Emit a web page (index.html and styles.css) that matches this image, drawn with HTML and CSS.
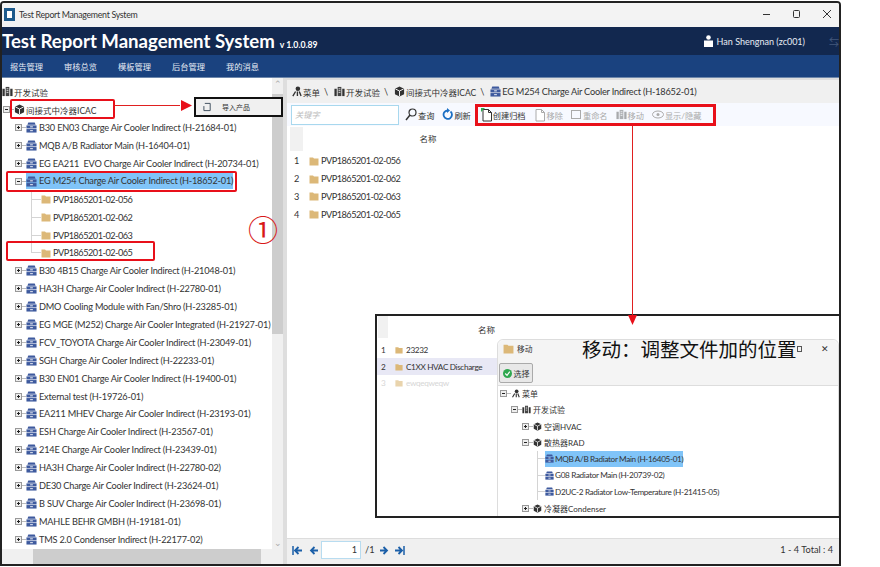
FILE: index.html
```html
<!DOCTYPE html>
<html lang="zh-CN">
<head>
  <meta charset="UTF-8">
  <title>Test Report Management System</title>
  <link rel="stylesheet" href="styles.css">
</head>
<body>

  <svg class="sprites" width="0" height="0">
    <symbol id="i-box" viewBox="0 0 12 12">
      <path d="M6 .5 11 3v6l-5 2.500L1 9V3z" fill="#333"/>
      <path d="M1.500 3.200 6 5.500l4.500-2.300M6 5.500V11" stroke="#fff" fill="none"/>
    </symbol>
    <symbol id="i-server" viewBox="0 0 12 12">
      <path d="M2.500 .5h7l1 2.500h-9z" fill="#3e5a9e"/>
      <rect x=".5" y="3.700" width="11" height="3.300" fill="#3e5a9e"/>
      <rect x=".5" y="7.700" width="11" height="3.800" fill="#3e5a9e"/>
      <rect x="4.500" y="4.800" width="3" height="1" fill="#fff"/>
      <rect x="4.500" y="9" width="3" height="1" fill="#fff"/>
    </symbol>
    <symbol id="i-folder" viewBox="0 0 10 10">
      <path d="M.5 1.500H4l1 1h4.500v7h-9z" fill="#dcb878"/>
    </symbol>
    <symbol id="i-lab" viewBox="0 0 12 12">
      <rect x=".5" y="3" width="2.500" height="8" fill="#333"/>
      <rect x="4" y="1" width="4" height="10" fill="#444"/>
      <rect x="9" y="3" width="2.500" height="8" fill="#333"/>
      <path d="M5 3h2M5 5h2M5 7h2" stroke="#fff" stroke-width=".8"/>
    </symbol>
    <symbol id="i-menu" viewBox="0 0 12 12">
      <circle cx="7.500" cy="3" r="2.500" fill="#333"/>
      <path d="M5 6 2 11M7 6v5M9 6l2 5" stroke="#333" stroke-width="1.500" fill="none"/>
    </symbol>
    <symbol id="i-plus" viewBox="0 0 11 7">
      <rect x=".5" y=".5" width="6" height="6" fill="#eee" stroke="#999"/>
      <path d="M2 3.500h3M3.500 2v3" stroke="#222"/>
      <path d="M7 3.500h4" stroke="#bbb"/>
    </symbol>
    <symbol id="i-minus" viewBox="0 0 11 7">
      <rect x=".5" y=".5" width="6" height="6" fill="#eee" stroke="#999"/>
      <path d="M2 3.500h3" stroke="#222"/>
      <path d="M7 3.500h4" stroke="#bbb"/>
    </symbol>
    <symbol id="i-page" viewBox="0 0 12 14">
      <path d="M2 1.500h5.500l3 3V13H2z" fill="#fff" stroke="currentColor"/>
      <path d="M7.500 1.500v3h3" fill="none" stroke="currentColor"/>
    </symbol>
    <symbol id="i-first" viewBox="0 0 10 9">
      <path d="M1 0v9" stroke="#1b5fa8" stroke-width="1.500"/>
      <path d="M10 4.500H4M6.500 1 3 4.500 6.500 8" stroke="#1b5fa8" stroke-width="1.800" fill="none"/>
    </symbol>
    <symbol id="i-prev" viewBox="0 0 10 9">
      <path d="M9 4.500H2M5.500 1 2 4.500 5.500 8" stroke="#1b5fa8" stroke-width="1.800" fill="none"/>
    </symbol>
    <symbol id="i-next" viewBox="0 0 10 9">
      <path d="M1 4.500h7M4.500 1 8 4.500 4.500 8" stroke="#1b5fa8" stroke-width="1.800" fill="none"/>
    </symbol>
    <symbol id="i-last" viewBox="0 0 10 9">
      <path d="M9 0v9" stroke="#1b5fa8" stroke-width="1.500"/>
      <path d="M0 4.500h6M3.500 1 7 4.500 3.500 8" stroke="#1b5fa8" stroke-width="1.800" fill="none"/>
    </symbol>
  </svg>

  <div class="window">
    <div class="titlebar">
      <svg class="app-icon" width="11" height="13" viewBox="0 0 11 13"><rect width="11" height="13" fill="#1d5a8c"/><rect x="3" y="3" width="5" height="7" fill="#fff"/></svg>
      <span class="title-text">Test Report Management System</span>
      <div class="win-btns">
        <svg width="10" height="10" viewBox="0 0 10 10"><path d="M1 5.500h7" stroke="#333"/></svg>
        <svg width="10" height="10" viewBox="0 0 10 10"><rect x="1.500" y="1.500" width="6" height="7" rx="1" fill="none" stroke="#333"/></svg>
        <svg width="10" height="10" viewBox="0 0 10 10"><path d="M1 1l8 8M9 1l-8 8" stroke="#333"/></svg>
      </div>
    </div>

    <header class="brand">
      <span class="brand-name">Test Report Management System</span>
      <span class="brand-ver">v 1.0.0.89</span>
      <div class="user">
        <svg width="9" height="12" viewBox="0 0 9 12"><circle cx="4.500" cy="2.500" r="2.300" fill="#fff"/><path d="M0 5.500h9V12H0z" fill="#fff"/></svg>
        <span>Han Shengnan (zc001)</span>
        <span class="swap">⇆</span>
      </div>
    </header>

    <nav class="nav">
      <a>报告管理</a><a>审核总览</a><a>模板管理</a><a>后台管理</a><a>我的消息</a>
    </nav>

    <main class="content">
      <aside class="side">
        <div class="tree">
          <div class="row lv0 cn"><svg class="ico"><use href="#i-lab"/></svg>开发试验</div>
          <div class="row lv1 cn"><svg class="exp"><use href="#i-minus"/></svg><svg class="ico"><use href="#i-box"/></svg>间接式中冷器ICAC</div>
          <div class="row lv2"><svg class="exp"><use href="#i-plus"/></svg><svg class="ico"><use href="#i-server"/></svg>B30 EN03 Charge Air Cooler Indirect (H-21684-01)</div>
          <div class="row lv2"><svg class="exp"><use href="#i-plus"/></svg><svg class="ico"><use href="#i-server"/></svg>MQB A/B Radiator Main (H-16404-01)</div>
          <div class="row lv2"><svg class="exp"><use href="#i-plus"/></svg><svg class="ico"><use href="#i-server"/></svg>EG EA211&nbsp; EVO Charge Air Cooler Indirect (H-20734-01)</div>
          <div class="row lv2"><svg class="exp"><use href="#i-minus"/></svg><span class="sel"><svg class="ico"><use href="#i-server"/></svg>EG M254 Charge Air Cooler Indirect (H-18652-01)</span></div>
          <div class="row lv3"><svg class="ico-f"><use href="#i-folder"/></svg>PVP1865201-02-056</div>
          <div class="row lv3"><svg class="ico-f"><use href="#i-folder"/></svg>PVP1865201-02-062</div>
          <div class="row lv3"><svg class="ico-f"><use href="#i-folder"/></svg>PVP1865201-02-063</div>
          <div class="row lv3 end"><svg class="ico-f"><use href="#i-folder"/></svg>PVP1865201-02-065</div>
          <div class="row lv2"><svg class="exp"><use href="#i-plus"/></svg><svg class="ico"><use href="#i-server"/></svg>B30 4B15 Charge Air Cooler Indirect (H-21048-01)</div>
          <div class="row lv2"><svg class="exp"><use href="#i-plus"/></svg><svg class="ico"><use href="#i-server"/></svg>HA3H Charge Air Cooler Indirect (H-22780-01)</div>
          <div class="row lv2"><svg class="exp"><use href="#i-plus"/></svg><svg class="ico"><use href="#i-server"/></svg>DMO Cooling Module with Fan/Shro (H-23285-01)</div>
          <div class="row lv2"><svg class="exp"><use href="#i-plus"/></svg><svg class="ico"><use href="#i-server"/></svg>EG MGE (M252) Charge Air Cooler Integrated (H-21927-01)</div>
          <div class="row lv2"><svg class="exp"><use href="#i-plus"/></svg><svg class="ico"><use href="#i-server"/></svg>FCV_TOYOTA Charge Air Cooler Indirect (H-23049-01)</div>
          <div class="row lv2"><svg class="exp"><use href="#i-plus"/></svg><svg class="ico"><use href="#i-server"/></svg>SGH Charge Air Cooler Indirect (H-22233-01)</div>
          <div class="row lv2"><svg class="exp"><use href="#i-plus"/></svg><svg class="ico"><use href="#i-server"/></svg>B30 EN01 Charge Air Cooler Indirect (H-19400-01)</div>
          <div class="row lv2"><svg class="exp"><use href="#i-plus"/></svg><svg class="ico"><use href="#i-server"/></svg>External test (H-19726-01)</div>
          <div class="row lv2"><svg class="exp"><use href="#i-plus"/></svg><svg class="ico"><use href="#i-server"/></svg>EA211 MHEV Charge Air Cooler Indirect (H-23193-01)</div>
          <div class="row lv2"><svg class="exp"><use href="#i-plus"/></svg><svg class="ico"><use href="#i-server"/></svg>ESH Charge Air Cooler Indirect (H-23567-01)</div>
          <div class="row lv2"><svg class="exp"><use href="#i-plus"/></svg><svg class="ico"><use href="#i-server"/></svg>214E Charge Air Cooler Indirect (H-23439-01)</div>
          <div class="row lv2"><svg class="exp"><use href="#i-plus"/></svg><svg class="ico"><use href="#i-server"/></svg>HA3H Charge Air Cooler Indirect (H-22780-02)</div>
          <div class="row lv2"><svg class="exp"><use href="#i-plus"/></svg><svg class="ico"><use href="#i-server"/></svg>DE30 Charge Air Cooler Indirect (H-23624-01)</div>
          <div class="row lv2"><svg class="exp"><use href="#i-plus"/></svg><svg class="ico"><use href="#i-server"/></svg>B SUV Charge Air Cooler Indirect (H-23698-01)</div>
          <div class="row lv2"><svg class="exp"><use href="#i-plus"/></svg><svg class="ico"><use href="#i-server"/></svg>MAHLE BEHR GMBH (H-19181-01)</div>
          <div class="row lv2"><svg class="exp"><use href="#i-plus"/></svg><svg class="ico"><use href="#i-server"/></svg>TMS 2.0 Condenser Indirect (H-22177-02)</div>
        </div>
        <div class="vbar"><span class="up">⌃</span><div class="vthumb"></div><span class="down">⌄</span></div>
        <div class="hbar"><div class="hthumb"></div></div>
      </aside>

      <section class="panel">
        <div class="crumbs">
          <svg class="ico"><use href="#i-menu"/></svg><span class="cn">菜单</span><i>\</i>
          <svg class="ico"><use href="#i-lab"/></svg><span class="cn">开发试验</span><i>\</i>
          <svg class="ico"><use href="#i-box"/></svg><span class="cn">间接式中冷器ICAC</span><i>\</i>
          <svg class="ico"><use href="#i-server"/></svg>EG M254 Charge Air Cooler Indirect (H-18652-01)
        </div>
        <div class="toolbar">
          <div class="search">关键字</div>
          <span class="tool"><svg width="12" height="13" viewBox="0 0 12 13"><circle cx="7.500" cy="4.500" r="3.500" fill="none" stroke="#333" stroke-width="1.200"/><path d="M5 7l-4 5" stroke="#333" stroke-width="1.500"/></svg>查询</span>
          <span class="tool"><svg width="11" height="13" viewBox="0 0 11 13"><path d="M8.500 3.500a4.200 4.200 0 1 1-3-1" fill="none" stroke="#1b6fc4" stroke-width="1.800"/><path d="M5 0l3 2.500L5 5z" fill="#1b6fc4"/></svg>刷新</span>
          <span class="tool tool-new"><svg width="12" height="14" viewBox="0 0 12 14" class="pg"><use href="#i-page" width="12" height="14"/><path d="M0 0h4L0 4z" fill="#2fa84f"/></svg>创建归档</span>
          <span class="tool off"><svg width="12" height="14" class="pg"><use href="#i-page"/></svg>移除</span>
          <span class="tool off"><svg width="11" height="11" viewBox="0 0 11 11"><rect x=".5" y="1.500" width="9" height="8" fill="none" stroke="#aaa"/></svg>重命名</span>
          <span class="tool off"><svg class="dim" width="11" height="11"><use href="#i-lab"/></svg>移动</span>
          <span class="tool off"><svg width="12" height="9" viewBox="0 0 12 9"><ellipse cx="6" cy="4.500" rx="5.500" ry="3.500" fill="none" stroke="#aaa"/><circle cx="6" cy="4.500" r="1.500" fill="#aaa"/></svg>显示/隐藏</span>
        </div>
        <div class="thead"><div class="corner"></div><div class="th-name">名称</div></div>
        <div class="tbody">
          <div class="trow"><span class="num">1</span><svg class="ico-f"><use href="#i-folder"/></svg>PVP1865201-02-056</div>
          <div class="trow"><span class="num">2</span><svg class="ico-f"><use href="#i-folder"/></svg>PVP1865201-02-062</div>
          <div class="trow"><span class="num">3</span><svg class="ico-f"><use href="#i-folder"/></svg>PVP1865201-02-063</div>
          <div class="trow"><span class="num">4</span><svg class="ico-f"><use href="#i-folder"/></svg>PVP1865201-02-065</div>
        </div>
        <div class="pager">
          <svg class="pg-btn"><use href="#i-first"/></svg>
          <svg class="pg-btn"><use href="#i-prev"/></svg>
          <div class="pg-input">1</div><span class="pg-total">/1</span>
          <svg class="pg-btn"><use href="#i-next"/></svg>
          <svg class="pg-btn"><use href="#i-last"/></svg>
          <span class="pg-info">1 - 4 Total : 4</span>
        </div>
      </section>
    </main>
  </div>

  <!-- annotations over the screenshot -->
  <div class="mark m-icac"></div>
  <div class="mark m-m254"></div>
  <div class="mark m-065"></div>
  <div class="mark m-tools"></div>
  <div class="circled">①</div>
  <div class="ctx">
    <svg width="9" height="10" viewBox="0 0 10 10"><path d="M2 1h6v8H1V4" fill="none" stroke="#345"/></svg>
    <span>导入产品</span>
  </div>

  <div class="inset">
    <div class="ins-list">
      <div class="ins-head"><div class="corner"></div><div class="ins-name">名称</div></div>
      <div class="ins-row"><span class="num">1</span><svg class="ico-f"><use href="#i-folder"/></svg>23232</div>
      <div class="ins-row hl"><span class="num">2</span><svg class="ico-f"><use href="#i-folder"/></svg>C1XX HVAC Discharge</div>
      <div class="ins-row faint"><span class="num">3</span><svg class="ico-f"><use href="#i-folder"/></svg>ewqeqweqw</div>
    </div>
    <div class="dlg">
      <div class="dlg-title">
        <svg class="ico"><use href="#i-folder"/></svg><span class="dlg-small">移动</span>
        <span class="dlg-big">移动：调整文件加的位置</span><span class="dlg-box"></span>
        <span class="dlg-x">✕</span>
      </div>
      <div class="dlg-tools">
        <span class="dlg-btn"><svg width="9" height="9" viewBox="0 0 10 10"><circle cx="5" cy="5" r="5" fill="#2fa84f"/><path d="M2.500 5l2 2 3-4" stroke="#fff" fill="none" stroke-width="1.300"/></svg>选择</span>
      </div>
      <div class="dlg-tree">
        <div class="drow d0 dcn"><svg class="exp"><use href="#i-minus"/></svg><svg class="ico"><use href="#i-menu"/></svg>菜单</div>
        <div class="drow d1 dcn"><svg class="exp"><use href="#i-minus"/></svg><svg class="ico"><use href="#i-lab"/></svg>开发试验</div>
        <div class="drow d2 dcn"><svg class="exp"><use href="#i-plus"/></svg><svg class="ico"><use href="#i-box"/></svg>空调HVAC</div>
        <div class="drow d2 dcn"><svg class="exp"><use href="#i-minus"/></svg><svg class="ico"><use href="#i-box"/></svg>散热器RAD</div>
        <div class="drow d3"><span class="sel"><svg class="ico"><use href="#i-server"/></svg>MQB A/B Radiator Main (H-16405-01)</span></div>
        <div class="drow d3"><svg class="ico"><use href="#i-server"/></svg>G08 Radiator Main (H-20739-02)</div>
        <div class="drow d3"><svg class="ico"><use href="#i-server"/></svg>D2UC-2 Radiator Low-Temperature (H-21415-05)</div>
        <div class="drow d2 dcn"><svg class="exp"><use href="#i-plus"/></svg><svg class="ico"><use href="#i-box"/></svg>冷凝器Condenser</div>
      </div>
    </div>
  </div>

  <svg class="arrows" width="880" height="567" viewBox="0 0 880 567">
    <path d="M114 105.500h66" stroke="#e02020"/>
    <path d="M181 100l11 5.500-11 5.500z" fill="#e8101a"/>
    <path d="M632.500 126v190" stroke="#e02020"/>
    <path d="M628 315h9l-4.500 10z" fill="#e8101a"/>
  </svg>

</body>
</html>
```

FILE: styles.css
```css
* {
  box-sizing: border-box;
}
html, body {
  margin: 0;
  height: 567px;
  overflow: hidden;
  background: #fff;
}
body {
  position: relative;
  font-family: Lato, "Noto Sans CJK SC", sans-serif;
  font-size: 9.2px;
  letter-spacing: -0.2px;
  color: #333;
}
.sprites {
  position: absolute;
}
svg {
  flex: none;
}
.cn {
  font-size: 8.5px;
  letter-spacing: 0;
}

/* window */
.window {
  width: 841px;
  height: 565px;
  margin-top: 1px;
  border: 2px solid #222;
  border-radius: 4px 4px 0 0;
  display: flex;
  flex-direction: column;
  overflow: hidden;
}
.titlebar {
  height: 24px;
  background: #f3f3f3;
  display: flex;
  align-items: center;
  padding: 0 0 2px 2px;
  flex: none;
}
.title-text {
  margin-left: 4px;
  font-size: 8.8px;
  letter-spacing: -0.3px;
}
.win-btns {
  margin-left: auto;
  display: flex;
  gap: 20px;
  padding-right: 7px;
}
.brand {
  height: 28px;
  flex: none;
  background: #12284f;
  color: #fff;
  display: flex;
  align-items: baseline;
}
.brand-name {
  font-size: 18.6px;
  font-weight: 700;
  letter-spacing: 0;
  line-height: 28px;
}
.brand-ver {
  margin-left: 5px;
  font-size: 8.7px;
  font-weight: 700;
  letter-spacing: 0;
}
.user {
  margin-left: auto;
  align-self: center;
  display: flex;
  align-items: center;
  gap: 4px;
  font-size: 9px;
  letter-spacing: 0;
  color: #e8ecf4;
}
.swap {
  margin-left: 20px;
  color: #44587c;
  font-size: 10px;
}
.nav {
  height: 23px;
  flex: none;
  background: #1a427f;
  border-bottom: 1px solid #6d87ab;
  display: flex;
  align-items: center;
  gap: 21px;
  padding-left: 8px;
  color: #e8edf5;
  font-size: 8.25px;
  letter-spacing: 0;
}

/* left tree */
.content {
  flex: 1;
  display: flex;
  gap: 4px;
  background: #dedede;
  min-height: 0;
}
.side {
  width: 281px;
  flex: none;
  background: #fff;
  display: grid;
  grid-template-columns: 1fr 11px;
  grid-template-rows: 1fr 15px;
  min-height: 0;
}
.tree {
  padding-top: 5px;
  overflow: hidden;
}
.row {
  height: 17.9px;
  display: flex;
  align-items: center;
  white-space: nowrap;
}
.ico {
  width: 11px;
  height: 11px;
  margin-right: 2px;
}
.ico-f {
  width: 10px;
  height: 10px;
  margin-right: 2px;
}
.exp {
  width: 11px;
  height: 7px;
}
.lv0 .ico {
  margin-right: 1px;
}
.lv1 {
  padding-left: 1px;
}
.lv1 .ico {
  margin-right: 1px;
}
.lv2 {
  padding-left: 13px;
}
.lv3 {
  padding-left: 29px;
  letter-spacing: -0.5px;
}
.lv3::before {
  content: "";
  width: 9px;
  height: 100%;
  border-left: 1px solid #d4d4d4;
  background: linear-gradient(#d4d4d4, #d4d4d4) center / 100% 1px no-repeat;
}
.lv3.end::before {
  height: 50%;
  align-self: flex-start;
  background: linear-gradient(#d4d4d4, #d4d4d4) bottom / 100% 1px no-repeat;
}
.sel {
  display: flex;
  align-items: center;
  background: #80c4f8;
  line-height: 16px;
}
.vbar {
  background: #f0f0f0;
  display: flex;
  flex-direction: column;
  align-items: center;
  color: #aaa;
  font-size: 9px;
}
.up, .down {
  height: 12px;
  line-height: 12px;
}
.vthumb {
  width: 100%;
  height: 240px;
  margin-top: 4px;
  background: #cdcdcd;
}
.down {
  margin-top: auto;
}
.hbar {
  grid-column: 1 / 3;
  background: #f0f0f0;
  padding-left: 31px;
}
.hthumb {
  width: 228px;
  height: 100%;
  background: #cdcdcd;
}

/* right panel */
.panel {
  flex: 1;
  min-width: 0;
  display: flex;
  flex-direction: column;
  margin-top: 2px;
  background: #fff;
}
.crumbs {
  height: 23px;
  flex: none;
  padding-left: 4px;
  background: #f0f0f0;
  display: flex;
  align-items: center;
  white-space: nowrap;
}
.crumbs .ico {
  margin-right: 1px;
}
.crumbs i {
  font-style: normal;
  margin: 0 6px 0 4px;
}
.toolbar {
  height: 23px;
  flex: none;
  background: #f7f9ff;
  display: flex;
  align-items: center;
  font-size: 8.2px;
  letter-spacing: 0;
}
.search {
  width: 108px;
  height: 20px;
  margin-left: 4px;
  border: 1px solid #a8d8ee;
  background: #fff;
  color: #bbb;
  font-style: italic;
  line-height: 18px;
  padding-left: 3px;
}
.tool {
  display: flex;
  align-items: center;
  gap: 1px;
  margin-left: 8px;
  white-space: nowrap;
}
.tool:nth-child(2) {
  margin-left: 6px;
}
.tool-new {
  margin-left: 10px;
  gap: 0;
}
.pg {
  color: #333;
}
.off {
  color: #aaa;
}
.off .pg {
  color: #aaa;
}
.dim {
  opacity: .4;
}
.thead {
  height: 24px;
  flex: none;
  margin-top: 1px;
  display: flex;
}
.corner {
  width: 13px;
  background: #f1f1f1;
  margin-left: 3px;
}
.th-name {
  width: 250px;
  text-align: center;
  line-height: 24px;
  font-size: 8.5px;
  letter-spacing: 0;
}
.tbody {
  flex: 1;
  padding-top: 1px;
}
.trow {
  height: 17.8px;
  display: flex;
  align-items: center;
  padding-left: 7px;
  letter-spacing: -0.5px;
}
.num {
  width: 15px;
}
.pager {
  height: 26px;
  flex: none;
  background: #f0f0f0;
  border-top: 1px solid #ddd;
  display: flex;
  align-items: flex-start;
  padding: 2px 0 0 5px;
  letter-spacing: 0;
}
.pg-btn {
  width: 10px;
  height: 9px;
  margin: 5px 7px 0 0;
}
.pg-btn:nth-child(2) {
  margin-right: 2px;
}
.pg-btn:nth-child(5) {
  margin-right: 6px;
}
.pg-input {
  width: 40px;
  height: 18px;
  border: 1px solid #b8dcf0;
  background: #fff;
  text-align: right;
  line-height: 16px;
  padding-right: 3px;
}
.pg-total {
  line-height: 18px;
  margin: 0 5px 0 4px;
}
.pg-info {
  margin-left: auto;
  margin-right: 6px;
  line-height: 18px;
}

/* annotations */
.mark {
  position: absolute;
  border: 2px solid #e8101a;
  border-radius: 2px;
}
.m-icac {
  left: 10px;
  top: 99px;
  width: 105px;
  height: 20px;
}
.m-m254 {
  left: 6px;
  top: 171px;
  width: 231px;
  height: 21px;
}
.m-065 {
  left: 6px;
  top: 241px;
  width: 149px;
  height: 20px;
}
.m-tools {
  left: 475px;
  top: 104px;
  width: 241px;
  height: 22px;
  border-width: 3px;
  border-radius: 0;
}
.circled {
  position: absolute;
  left: 248px;
  top: 210px;
  color: #d81818;
  font-family: "Noto Sans CJK SC", serif;
  font-size: 30px;
  letter-spacing: 0;
  line-height: 36px;
}
.arrows {
  position: absolute;
  left: 0;
  top: 0;
  pointer-events: none;
}
.ctx {
  position: absolute;
  left: 194px;
  top: 97px;
  width: 89px;
  height: 20px;
  border: 2px solid #111;
  background: #f0f0f0;
  display: flex;
  align-items: center;
  padding-left: 7px;
  font-size: 7px;
  letter-spacing: 0;
  gap: 10px;
}

/* inset picture of the move dialog */
.inset {
  position: absolute;
  left: 375px;
  top: 314px;
  width: 466px;
  height: 204px;
  border: 2px solid #222;
  background: #fff;
  overflow: hidden;
}
.ins-list {
  position: absolute;
  left: 0;
  top: 0;
  width: 122px;
}
.ins-head {
  height: 22px;
  display: flex;
  width: 300px;
}
.ins-head .corner {
  margin-left: 1px;
  width: 10px;
}
.ins-name {
  margin-left: 90px;
  line-height: 28px;
  font-size: 8.5px;
  letter-spacing: 0;
}
.ins-row {
  height: 16.4px;
  display: flex;
  align-items: center;
  padding-left: 4px;
  font-size: 8.2px;
  letter-spacing: -0.35px;
  white-space: nowrap;
}
.ins-row .num {
  width: 14px;
}
.ins-row .ico-f {
  width: 8px;
  height: 8px;
  margin-right: 3px;
}
.ins-head + .ins-row {
  margin-top: 4px;
}
.hl {
  background: #e8e8f5;
}
.faint {
  color: #bbb;
  opacity: .6;
}
.dlg {
  position: absolute;
  left: 120px;
  top: 23px;
  width: 342px;
  height: 180px;
  background: #fff;
  border: 1px solid #ddd;
  border-radius: 6px 6px 0 0;
}
.dlg-title {
  height: 21px;
  display: flex;
  align-items: center;
  background: #f4f4f4;
  padding: 0 0 4px 5px;
  border-radius: 6px 6px 0 0;
}
.dlg-small {
  font-size: 7.7px;
  letter-spacing: 0;
  width: 65px;
  margin-left: 1px;
}
.dlg-big {
  font-family: "Noto Sans CJK SC", sans-serif;
  font-size: 19.5px;
  letter-spacing: 0;
  color: #111;
  white-space: nowrap;
}
.dlg-box {
  width: 5px;
  height: 6px;
  border: 1px solid #555;
}
.dlg-x {
  margin-left: auto;
  padding-right: 9px;
  font-size: 9px;
}
.dlg-tools {
  height: 25px;
  display: flex;
  align-items: center;
  background: #f4f4f4;
  border-bottom: 1px solid #ddd;
  padding-left: 1px;
}
.dlg-btn {
  display: flex;
  align-items: center;
  gap: 2px;
  width: 34px;
  height: 20px;
  justify-content: center;
  border: 1px solid #aaa;
  border-radius: 2px;
  background: #e8e8e8;
  font-size: 8px;
  letter-spacing: 0;
}
.dlg-tree {
  margin-top: -1px;
}
.drow {
  height: 16.45px;
  display: flex;
  align-items: center;
  font-size: 8.2px;
  letter-spacing: -0.35px;
  white-space: nowrap;
}
.dcn {
  font-size: 8px;
  letter-spacing: 0;
}
.drow .ico {
  width: 9px;
  height: 9px;
}
.d3 .ico {
  margin-right: 1px;
}
.d0 {
  padding-left: 2px;
}
.d1 {
  padding-left: 13px;
}
.d2 {
  padding-left: 24px;
}
.d3 {
  padding-left: 39px;
}
.d3::before {
  content: "";
  width: 7px;
  height: 100%;
  border-left: 1px solid #d4d4d4;
  background: linear-gradient(#d4d4d4, #d4d4d4) center / 100% 1px no-repeat;
}
```
